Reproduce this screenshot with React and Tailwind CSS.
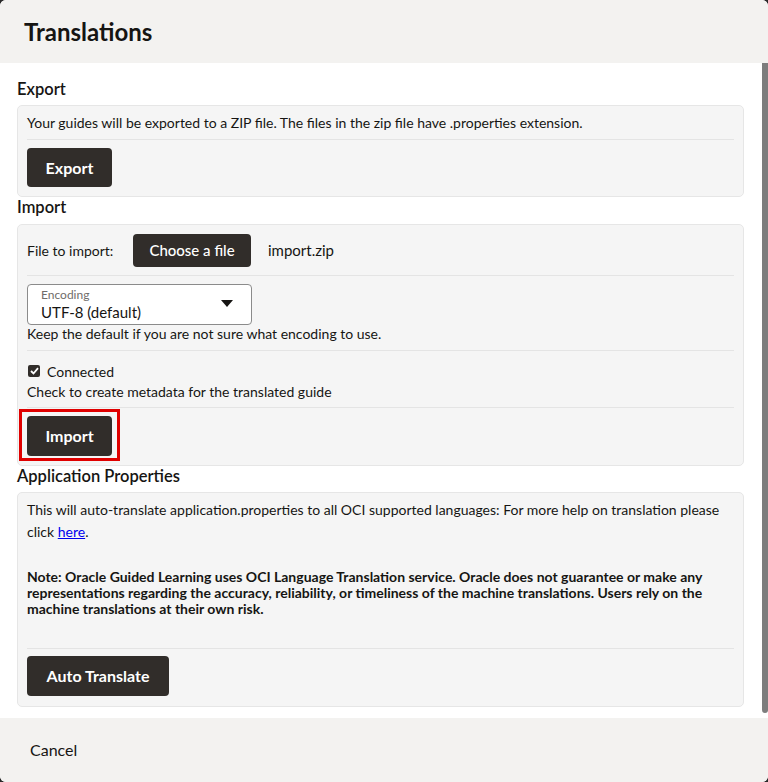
import React from "react";

function Divider() {
  return <div className="h-px bg-[#e4e4e4]" />;
}

function DarkButton({ children, className = "" }) {
  return (
    <button
      className={
        "bg-[#312d2a] text-white rounded-[4px] font-bold text-[16px] " + className
      }
    >
      {children}
    </button>
  );
}

export default function App() {
  return (
    <div
      className="w-[768px] h-[782px] bg-[#2a2a2a] overflow-hidden"
      style={{ fontFamily: "Lato, 'Noto Sans', sans-serif" }}
    >
      <div className="w-[768px] h-[782px] rounded-[6px] overflow-hidden flex flex-col bg-white text-[#161513]">
        {/* Header */}
        <div className="h-[63px] shrink-0 bg-[#f3f2f0] flex items-center pl-6">
          <h1 className="text-[24px] font-bold leading-none mt-[1px]">Translations</h1>
        </div>

        {/* Body */}
        <div className="flex-1 flex bg-white">
          <div className="flex-1 pl-[17px] pr-[18px] pt-[15px]">
            {/* Export */}
            <h2 className="text-[16.5px] font-semibold leading-[22px] mb-[5px]">Export</h2>
            <div className="bg-[#f5f5f5] border border-[#e6e6e6] rounded-[5px] px-[9px] pt-[7px] pb-[9px]">
              <p className="text-[14px] leading-[20px] mb-[6px]">
                Your guides will be exported to a ZIP file. The files in the zip file have .properties extension.
              </p>
              <Divider />
              <DarkButton className="mt-[8px] w-[85px] h-[39px]">Export</DarkButton>
            </div>

            {/* Import */}
            <h2 className="text-[16.5px] font-semibold leading-[22px] mt-[-1px] mb-[6px]">Import</h2>
            <div className="bg-[#f5f5f5] border border-[#e6e6e6] rounded-[5px] px-[9px] pt-[9px] pb-[9px]">
              <div className="flex items-center h-[33px] text-[14px]">
                <span className="w-[106px]">File to import:</span>
                <button className="bg-[#312d2a] text-white rounded-[4px] text-[15px] font-medium w-[118px] h-[33px]">
                  Choose a file
                </button>
                <span className="ml-[17px] text-[15px]">import.zip</span>
              </div>
              <div className="mt-[8px]">
                <Divider />
              </div>
              <div className="mt-[8px] w-[225px] h-[41px] bg-white border border-[#8b8b8b] rounded-[4px] relative pl-[13px]">
                <div className="text-[12px] text-[#6f6c6a] leading-[14px] mt-[3px]">Encoding</div>
                <div className="text-[15px] leading-[18px] mt-[1px]">UTF-8 (default)</div>
                <svg className="absolute right-[18px] top-[15px]" width="12" height="7" viewBox="0 0 12 7">
                  <path d="M0 0 L12 0 L6 7 Z" fill="#161513" />
                </svg>
              </div>
              <p className="text-[14px] leading-[18px]">Keep the default if you are not sure what encoding to use.</p>
              <div className="mt-[7px]">
                <Divider />
              </div>
              <div className="flex items-center mt-[11px] h-[18px]">
                <span className="w-[12px] h-[12px] bg-[#312d2a] rounded-[2px] flex items-center justify-center ml-[1px]">
                  <svg width="9" height="8" viewBox="0 0 9 8">
                    <path d="M1 4 L3.5 6.5 L8 1.2" stroke="white" strokeWidth="1.8" fill="none" />
                  </svg>
                </span>
                <span className="text-[14px] ml-[7px]">Connected</span>
              </div>
              <p className="text-[14px] leading-[18px] mt-[3px]">Check to create metadata for the translated guide</p>
              <div className="mt-[6px]">
                <Divider />
              </div>
              <div className="relative mt-[8px] w-[85px] h-[40px]">
                <DarkButton className="w-[85px] h-[40px]">Import</DarkButton>
                <div className="absolute left-[-8px] top-[-7px] w-[101px] h-[52px] border-[3px] border-[#e00000] pointer-events-none" />
              </div>
            </div>

            {/* Application Properties */}
            <h2 className="text-[16.5px] font-semibold leading-[22px] mt-[-1px] mb-[5px]">Application Properties</h2>
            <div className="bg-[#f5f5f5] border border-[#e6e6e6] rounded-[5px] px-[9px] pt-[6px] pb-[10px]">
              <p className="text-[14px] leading-[22px]">
                This will auto-translate application.properties to all OCI supported languages: For more help on translation please click{" "}
                <a href="#" className="text-[#0000ee] underline">here</a>.
              </p>
              <p className="text-[14px] leading-[16px] font-bold mt-[26px]">
                Note: Oracle Guided Learning uses OCI Language Translation service. Oracle does not guarantee or make any representations regarding the accuracy, reliability, or timeliness of the machine translations. Users rely on the machine translations at their own risk.
              </p>
              <div className="mt-[31px]">
                <Divider />
              </div>
              <DarkButton className="mt-[7px] w-[142px] h-[40px]">Auto Translate</DarkButton>
            </div>
          </div>
          {/* Scrollbar */}
          <div className="w-[6px] shrink-0 flex flex-col">
            <div className="h-[650px] bg-[#7d7d7d] rounded-b-[3px]" />
          </div>
        </div>

        {/* Footer */}
        <div className="h-[64px] shrink-0 bg-[#f3f2f0] flex items-center pl-[30px]">
          <span className="text-[16px]">Cancel</span>
        </div>
      </div>
    </div>
  );
}
